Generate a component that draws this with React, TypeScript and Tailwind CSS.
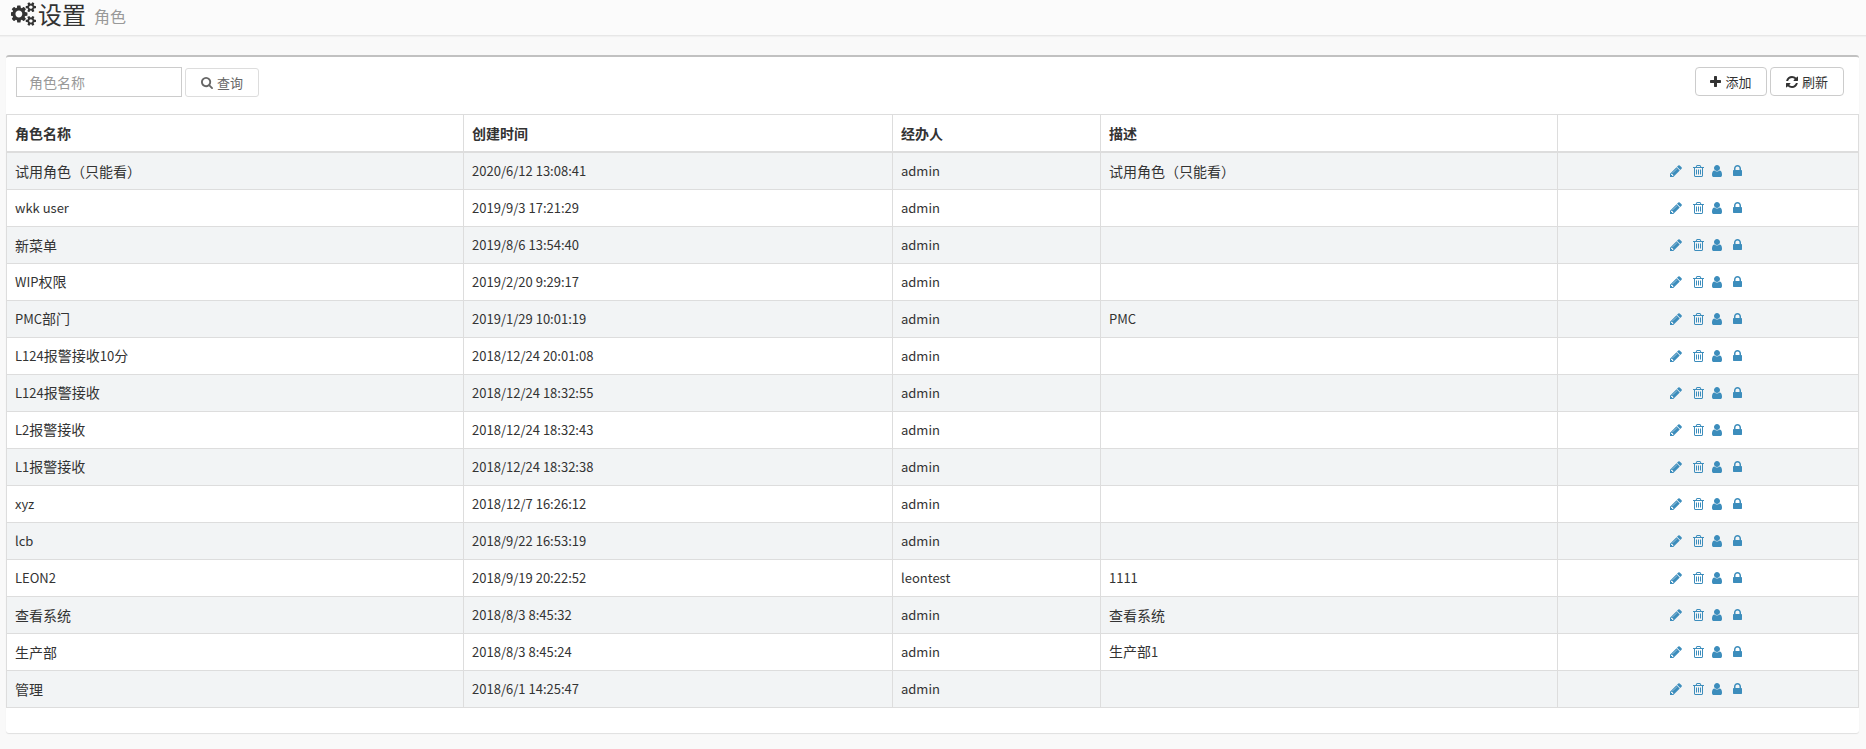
import React from 'react';

interface Role {
  name: string;
  createdAt: string;
  operator: string;
  description?: string;
}

const roles: Role[] = [
  { name: '试用角色（只能看）', createdAt: '2020/6/12 13:08:41', operator: 'admin', description: '试用角色（只能看）' },
  { name: 'wkk user', createdAt: '2019/9/3 17:21:29', operator: 'admin' },
  { name: '新菜单', createdAt: '2019/8/6 13:54:40', operator: 'admin' },
  { name: 'WIP权限', createdAt: '2019/2/20 9:29:17', operator: 'admin' },
  { name: 'PMC部门', createdAt: '2019/1/29 10:01:19', operator: 'admin', description: 'PMC' },
  { name: 'L124报警接收10分', createdAt: '2018/12/24 20:01:08', operator: 'admin' },
  { name: 'L124报警接收', createdAt: '2018/12/24 18:32:55', operator: 'admin' },
  { name: 'L2报警接收', createdAt: '2018/12/24 18:32:43', operator: 'admin' },
  { name: 'L1报警接收', createdAt: '2018/12/24 18:32:38', operator: 'admin' },
  { name: 'xyz', createdAt: '2018/12/7 16:26:12', operator: 'admin' },
  { name: 'lcb', createdAt: '2018/9/22 16:53:19', operator: 'admin' },
  { name: 'LEON2', createdAt: '2018/9/19 20:22:52', operator: 'leontest', description: '1111' },
  { name: '查看系统', createdAt: '2018/8/3 8:45:32', operator: 'admin', description: '查看系统' },
  { name: '生产部', createdAt: '2018/8/3 8:45:24', operator: 'admin', description: '生产部1' },
  { name: '管理', createdAt: '2018/6/1 14:25:47', operator: 'admin' },
];

const icons = {
  cogs: {
    viewBox: '0 0 1920 1792',
    d: 'M832 896q0-106-75-181t-181-75-181 75-75 181 75 181 181 75 181-75 75-181zm768 512q0-52-38-90t-90-38-90 38-38 90q0 53 37.5 90.5t90.5 37.5 90.5-37.5 37.5-90.5zm0-1024q0-52-38-90t-90-38-90 38-38 90q0 53 37.5 90.5t90.5 37.5 90.5-37.5 37.5-90.5zm-384 421v185q0 10-7 19.5t-16 10.5l-155 24q-11 35-32 76 34 48 90 115 7 11 7 20 0 12-7 19-23 30-82.5 89.5t-78.5 59.5q-11 0-21-7l-115-90q-37 19-77 31-11 108-23 155-7 24-30 24h-186q-11 0-20-7.5t-10-17.5l-23-153q-34-10-75-31l-118 89q-7 7-20 7-11 0-21-8-144-133-144-160 0-9 7-19 10-14 41-53t47-61q-23-44-35-82l-152-24q-10-1-17-9.5t-7-19.5v-185q0-10 7-19.5t16-10.5l155-24q11-35 32-76-34-48-90-115-7-11-7-20 0-12 7-20 22-30 82-89t79-59q11 0 21 7l115 90q34-18 77-32 11-108 23-154 7-24 30-24h186q11 0 20 7.5t10 17.5l23 153q34 10 75 31l118-89q8-7 20-7 11 0 21 8 144 133 144 160 0 8-7 19-12 16-42 54t-45 60q23 48 34 82l152 23q10 2 17 10.5t7 19.5zm640 533v140q0 16-149 31-12 27-30 52 51 113 51 138 0 4-4 7-122 71-124 71-8 0-46-47t-52-68q-20 2-30 2t-30-2q-14 21-52 68t-46 47q-2 0-124-71-4-3-4-7 0-25 51-138-18-25-30-52-149-15-149-31v-140q0-16 149-31 13-29 30-52-51-113-51-138 0-4 4-7 4-2 35-20t59-34 30-16q8 0 46 46.5t52 67.5q20-2 30-2t30 2q51-71 92-112l6-2q4 0 124 70 4 3 4 7 0 25-51 138 17 23 30 52 149 15 149 31zm0-1024v140q0 16-149 31-12 27-30 52 51 113 51 138 0 4-4 7-122 71-124 71-8 0-46-47t-52-68q-20 2-30 2t-30-2q-14 21-52 68t-46 47q-2 0-124-71-4-3-4-7 0-25 51-138-18-25-30-52-149-15-149-31v-140q0-16 149-31 13-29 30-52-51-113-51-138 0-4 4-7 4-2 35-20t59-34 30-16q8 0 46 46.5t52 67.5q20-2 30-2t30 2q51-71 92-112l6-2q4 0 124 70 4 3 4 7 0 25-51 138 17 23 30 52 149 15 149 31z',
  },
  search: {
    viewBox: '64 128 1664 1664',
    d: 'M1216 832q0-185-131.5-316.5t-316.5-131.5-316.5 131.5-131.5 316.5 131.5 316.5 316.5 131.5 316.5-131.5 131.5-316.5zm512 832q0 52-38 90t-90 38q-54 0-90-38l-343-342q-179 124-399 124-143 0-273.5-55.5t-225-150-150-225-55.5-273.5 55.5-273.5 150-225 225-150 273.5-55.5 273.5 55.5 225 150 150 225 55.5 273.5q0 220-124 399l343 343q37 37 37 90z',
  },
  plus: {
    viewBox: '192 128 1408 1408',
    d: 'M1600 736v192q0 40-28 68t-68 28h-416v416q0 40-28 68t-68 28h-192q-40 0-68-28t-28-68v-416h-416q-40 0-68-28t-28-68v-192q0-40 28-68t68-28h416v-416q0-40 28-68t68-28h192q40 0 68 28t28 68v416h416q40 0 68 28t28 68z',
  },
  refresh: {
    viewBox: '128 128 1536 1536',
    d: 'M1639 1056q0 5-1 7-64 268-268 434.5t-478 166.5q-146 0-282.5-55t-243.5-157l-129 129q-19 19-45 19t-45-19-19-45v-448q0-26 19-45t45-19h448q26 0 45 19t19 45-19 45l-137 137q71 66 161 102t187 36q134 0 250-65t186-179q11-17 53-117 8-23 30-23h192q13 0 22.5 9.5t9.5 22.5zm25-800v448q0 26-19 45t-45 19h-448q-26 0-45-19t-19-45 19-45l138-138q-148-137-349-137-134 0-250 65t-186 179q-11 17-53 117-8 23-30 23h-199q-13 0-22.5-9.5t-9.5-22.5v-7q65-268 270-434.5t480-166.5q146 0 284 55.5t245 156.5l130-129q19-19 45-19t45 19 19 45z',
  },
  pencil: {
    viewBox: '128 0 1536 1792',
    d: 'M491 1536l91-91-235-235-91 91v107h128v128h107zm523-928q0-22-22-22-10 0-17 7l-542 542q-7 7-7 17 0 22 22 22 10 0 17-7l542-542q7-7 7-17zm-54-192l416 416-832 832h-416v-416zm683 96q0 53-37 90l-166 166-416-416 166-165q36-38 90-38 53 0 91 38l235 234q37 39 37 91z',
  },
  trash: {
    viewBox: '192 0 1408 1792',
    d: 'M704 736v576q0 14-9 23t-23 9h-64q-14 0-23-9t-9-23v-576q0-14 9-23t23-9h64q14 0 23 9t9 23zm256 0v576q0 14-9 23t-23 9h-64q-14 0-23-9t-9-23v-576q0-14 9-23t23-9h64q14 0 23 9t9 23zm256 0v576q0 14-9 23t-23 9h-64q-14 0-23-9t-9-23v-576q0-14 9-23t23-9h64q14 0 23 9t9 23zm128 724v-948h-896v948q0 22 7 40.5t14.5 27 10.5 8.5h832q3 0 10.5-8.5t14.5-27 7-40.5zm-672-1076h448l-48-117q-7-9-17-11h-317q-10 2-17 11zm928 32v64q0 14-9 23t-23 9h-96v948q0 83-47 143.5t-113 60.5h-832q-66 0-113-58.5t-47-141.5v-952h-96q-14 0-23-9t-9-23v-64q0-14 9-23t23-9h309l70-167q15-37 54-63t79-26h320q40 0 79 26t54 63l70 167h309q14 0 23 9t9 23z',
  },
  user: {
    viewBox: '256 0 1280 1792',
    d: 'M1536 1399q0 109-62.5 187t-150.5 78h-854q-88 0-150.5-78t-62.5-187q0-85 8.5-160.5t31.5-152 58.5-131 94-89 134.5-34.5q131 128 313 128t313-128q76 0 134.5 34.5t94 89 58.5 131 31.5 152 8.5 160.5zm-256-887q0 159-112.5 271.5t-271.5 112.5-271.5-112.5-112.5-271.5 112.5-271.5 271.5-112.5 271.5 112.5 112.5 271.5z',
  },
  lock: {
    viewBox: '320 0 1152 1792',
    d: 'M640 768h512v-192q0-106-75-181t-181-75-181 75-75 181v192zm832 96v576q0 40-28 68t-68 28h-960q-40 0-68-28t-28-68v-576q0-40 28-68t68-28h32v-192q0-184 132-316t316-132 316 132 132 316v192h32q40 0 68 28t28 68z',
  },
};

const Icon: React.FC<{ name: keyof typeof icons; className: string }> = ({ name, className }) => (
  <svg viewBox={icons[name].viewBox} className={className} fill="currentColor" aria-hidden="true">
    <path d={icons[name].d} />
  </svg>
);

const MixedText: React.FC<{ text: string }> = ({ text }) => (
  <>
    {text
      .split(/([\x20-\x7e]+)/)
      .filter(Boolean)
      .map((part, i) =>
        /^[\x20-\x7e]/.test(part) ? (
          <span key={i} className="text-[13px]">
            {part}
          </span>
        ) : (
          part
        )
      )}
  </>
);

const RowActions: React.FC = () => (
  <div className="flex items-center justify-center gap-[11px] pr-1 text-[#3c8dbc]">
    <a href="#edit" aria-label="编辑">
      <Icon name="pencil" className="h-[14px] w-[12px]" />
    </a>
    <span className="flex gap-2">
      <a href="#delete" aria-label="删除">
        <Icon name="trash" className="h-[14px] w-[11px]" />
      </a>
      <a href="#users" aria-label="用户">
        <Icon name="user" className="h-[14px] w-[10px]" />
      </a>
    </span>
    <a href="#permissions" aria-label="权限">
      <Icon name="lock" className="h-[14px] w-[9px]" />
    </a>
  </div>
);

export const RoleSettings: React.FC = () => {
  const headCell = 'border border-[#ddd] p-2 text-left';
  const cell = 'border border-[#ddd] px-2 py-1 text-left';

  return (
    <div className="min-h-screen bg-[#f9f9f9] font-['Noto_Sans_CJK_SC',sans-serif] text-[14px] leading-[20px] text-[#333]">
      <header className="flex h-[36px] items-start border-b border-[#e7e7e7] bg-[#fbfbfb] pl-[11px] shadow-[0_1px_1px_rgba(0,0,0,0.03)]">
        <h1 className="flex items-center text-[24px] leading-[24px]">
          <Icon name="cogs" className="h-[24px] w-[26px]" />
          <span className="ml-px">设置</span>
          <small className="ml-2 pt-1 text-[16px] text-[#999]">角色</small>
        </h1>
      </header>

      <main className="pt-[19px] pr-[7px] pl-[6px]">
        <section className="rounded-[3px] border-t-[2px] border-[#c1c1c1] bg-white pb-[25px] shadow-[0_1px_1px_rgba(0,0,0,0.1)]">
          <div className="flex items-start justify-between pt-[10px] pr-[15px] pb-[17px] pl-[10px]">
            <form className="flex items-end gap-[3px]" onSubmit={e => e.preventDefault()}>
              <input
                type="text"
                aria-label="角色名称"
                placeholder="角色名称"
                className="h-[30px] w-[166px] border border-[#ccc] bg-white px-3 text-[14px] placeholder:text-[#999]"
              />
              <button
                type="submit"
                className="flex h-[29px] w-[74px] items-center justify-center gap-1 rounded-[3px] border border-[#ddd] bg-white text-[13px] text-[#666]"
              >
                <Icon name="search" className="size-[12px]" />
                查询
              </button>
            </form>
            <div className="flex gap-[3px]">
              <button
                type="button"
                className="flex h-[29px] w-[72px] items-center justify-center gap-1 rounded-[4px] border border-[#ccc] bg-white text-[13px]"
              >
                <Icon name="plus" className="size-[11px]" />
                添加
              </button>
              <button
                type="button"
                className="flex h-[29px] w-[74px] items-center justify-center gap-1 rounded-[4px] border border-[#ccc] bg-white text-[13px]"
              >
                <Icon name="refresh" className="size-[12px]" />
                刷新
              </button>
            </div>
          </div>

          <table className="w-full table-fixed border-collapse">
            <colgroup>
              <col className="w-[24.68%]" />
              <col className="w-[23.16%]" />
              <col className="w-[11.23%]" />
              <col className="w-[24.68%]" />
              <col className="w-[16.25%]" />
            </colgroup>
            <thead>
              <tr className="border-b-2 border-[#ddd] font-bold">
                <th className={headCell}>角色名称</th>
                <th className={headCell}>创建时间</th>
                <th className={headCell}>经办人</th>
                <th className={headCell}>描述</th>
                <th className={headCell} aria-label="操作" />
              </tr>
            </thead>
            <tbody>
              {roles.map(role => (
                <tr key={role.name} className="h-[37px] odd:bg-[#f2f4f5]">
                  <td className={cell}>
                    <MixedText text={role.name} />
                  </td>
                  <td className={cell}>
                    <MixedText text={role.createdAt} />
                  </td>
                  <td className={cell}>
                    <MixedText text={role.operator} />
                  </td>
                  <td className={cell}>
                    <MixedText text={role.description ?? ''} />
                  </td>
                  <td className={cell}>
                    <RowActions />
                  </td>
                </tr>
              ))}
            </tbody>
          </table>
        </section>
      </main>
    </div>
  );
};

export default RoleSettings;
